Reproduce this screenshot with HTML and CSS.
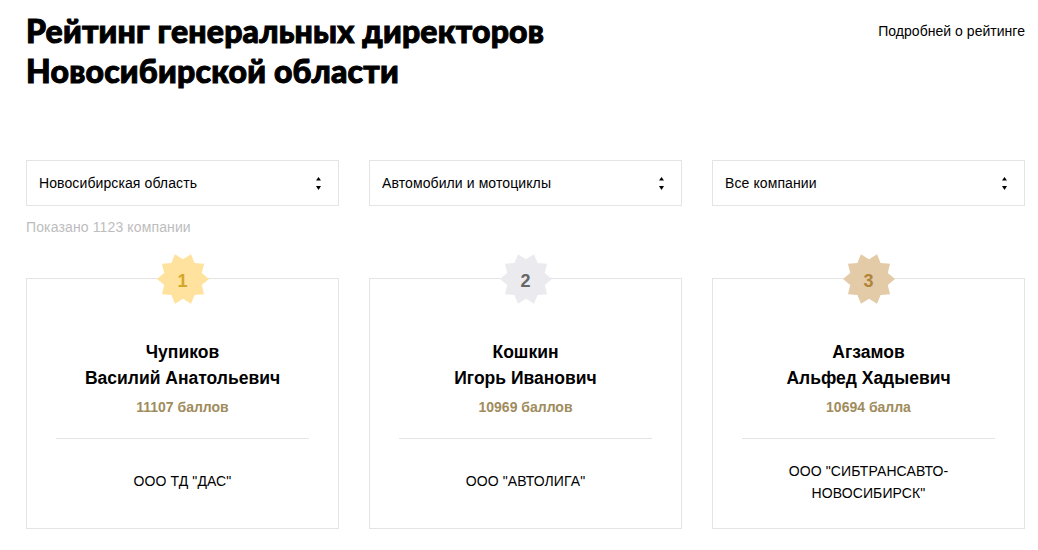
FILE: index.html
```html
<!DOCTYPE html>
<html lang="ru">
<head>
<meta charset="utf-8">
<title>Рейтинг генеральных директоров</title>
<link rel="stylesheet" href="styles.css">
</head>
<body>
<main class="page">
  <header class="head">
    <h1 class="title">Рейтинг генеральных директоров<br>Новосибирской области</h1>
    <a class="more" href="#">Подробней о рейтинге</a>
  </header>
  <section class="filters">
    <div class="select"><span>Новосибирская область</span><svg class="arrows" width="5" height="13" viewBox="0 0 5 13"><path d="M2.5 0 5 3.5H0ZM0 9H5L2.5 13Z"/></svg></div>
    <div class="select"><span>Автомобили и мотоциклы</span><svg class="arrows" width="5" height="13" viewBox="0 0 5 13"><path d="M2.5 0 5 3.5H0ZM0 9H5L2.5 13Z"/></svg></div>
    <div class="select"><span>Все компании</span><svg class="arrows" width="5" height="13" viewBox="0 0 5 13"><path d="M2.5 0 5 3.5H0ZM0 9H5L2.5 13Z"/></svg></div>
  </section>
  <p class="count">Показано 1123 компании</p>
  <section class="cards">
    <article class="card">
      <div class="badge gold"><svg class="star" width="52" height="52" viewBox="0 0 50 50"><polygon points="50,25 43.07,19.13 45.23,10.3 36.17,9.63 32.73,1.22 25,6 17.27,1.22 13.83,9.63 4.77,10.3 6.93,19.13 0,25 6.93,30.87 4.77,39.7 13.83,40.37 17.27,48.78 25,44 32.73,48.78 36.17,40.37 45.23,39.7 43.07,30.87"/></svg><span class="num">1</span></div>
      <h2 class="name">Чупиков<br>Василий Анатольевич</h2>
      <p class="score">11107 баллов</p>
      <p class="company">ООО ТД "ДАС"</p>
    </article>
    <article class="card">
      <div class="badge silver"><svg class="star" width="52" height="52" viewBox="0 0 50 50"><polygon points="50,25 43.07,19.13 45.23,10.3 36.17,9.63 32.73,1.22 25,6 17.27,1.22 13.83,9.63 4.77,10.3 6.93,19.13 0,25 6.93,30.87 4.77,39.7 13.83,40.37 17.27,48.78 25,44 32.73,48.78 36.17,40.37 45.23,39.7 43.07,30.87"/></svg><span class="num">2</span></div>
      <h2 class="name">Кошкин<br>Игорь Иванович</h2>
      <p class="score">10969 баллов</p>
      <p class="company">ООО "АВТОЛИГА"</p>
    </article>
    <article class="card">
      <div class="badge bronze"><svg class="star" width="52" height="52" viewBox="0 0 50 50"><polygon points="50,25 43.07,19.13 45.23,10.3 36.17,9.63 32.73,1.22 25,6 17.27,1.22 13.83,9.63 4.77,10.3 6.93,19.13 0,25 6.93,30.87 4.77,39.7 13.83,40.37 17.27,48.78 25,44 32.73,48.78 36.17,40.37 45.23,39.7 43.07,30.87"/></svg><span class="num">3</span></div>
      <h2 class="name">Агзамов<br>Альфед Хадыевич</h2>
      <p class="score">10694 балла</p>
      <p class="company">ООО "СИБТРАНСАВТО-<br>НОВОСИБИРСК"</p>
    </article>
  </section>
</main>
</body>
</html>
```
FILE: styles.css
```css
* { box-sizing: border-box; }
html, body { margin: 0; padding: 0; background: #fff; overflow: hidden; }
body { font-family: "Liberation Sans", Arial, sans-serif; color: #000; }
.page { padding: 11px 13px 0 26px; }
.head { display: flex; justify-content: space-between; align-items: flex-start; height: 149px; }
.title { margin: 0; font-family: Lato, sans-serif; font-weight: 900; font-size: 32px; line-height: 40px; letter-spacing: .2px; -webkit-text-stroke: 1px #000; color: #000; }
.more { margin-top: 12px; font-size: 14px; line-height: 17px; letter-spacing: .03px; color: #000; text-decoration: none; }
.filters, .cards { display: grid; grid-template-columns: repeat(3, 313px); column-gap: 30px; }
.select { height: 46px; border: 1px solid #e4e4e4; display: flex; align-items: center; justify-content: space-between; padding: 0 17px 0 12px; font-size: 14px; letter-spacing: .1px; }
.arrows { display: block; fill: #000; }
.count { margin: 13px 0 0; height: 59px; font-size: 14px; line-height: 16px; letter-spacing: .13px; color: #bdbdbd; }
.card { position: relative; height: 251px; border: 1px solid #e4e4e4; padding: 60px 29px 0; text-align: center; }
.badge { position: absolute; left: 130.5px; top: -25px; width: 50px; height: 50px; display: flex; align-items: center; justify-content: center; }
.star { position: absolute; left: -1px; top: -1px; }
.num { position: relative; top: 2px; font-size: 18px; font-weight: 700; }
.gold .star { fill: #ffe29e; }
.gold .num { color: #d4a62a; }
.silver .star { fill: #ebebef; }
.silver .num { color: #666; }
.bronze .star { fill: #e4cba8; }
.bronze .num { color: #b08539; }
.name { margin: 0; font-size: 17.5px; line-height: 26px; font-weight: 700; }
.score { margin: 8px 0 0; padding-bottom: 23px; border-bottom: 1px solid #e4e4e4; font-size: 14px; line-height: 16px; font-weight: 700; color: #a08c5c; }
.company { margin: 21px 0 0; min-height: 42px; display: flex; align-items: center; justify-content: center; font-size: 14px; line-height: 22px; letter-spacing: .1px; }
```
